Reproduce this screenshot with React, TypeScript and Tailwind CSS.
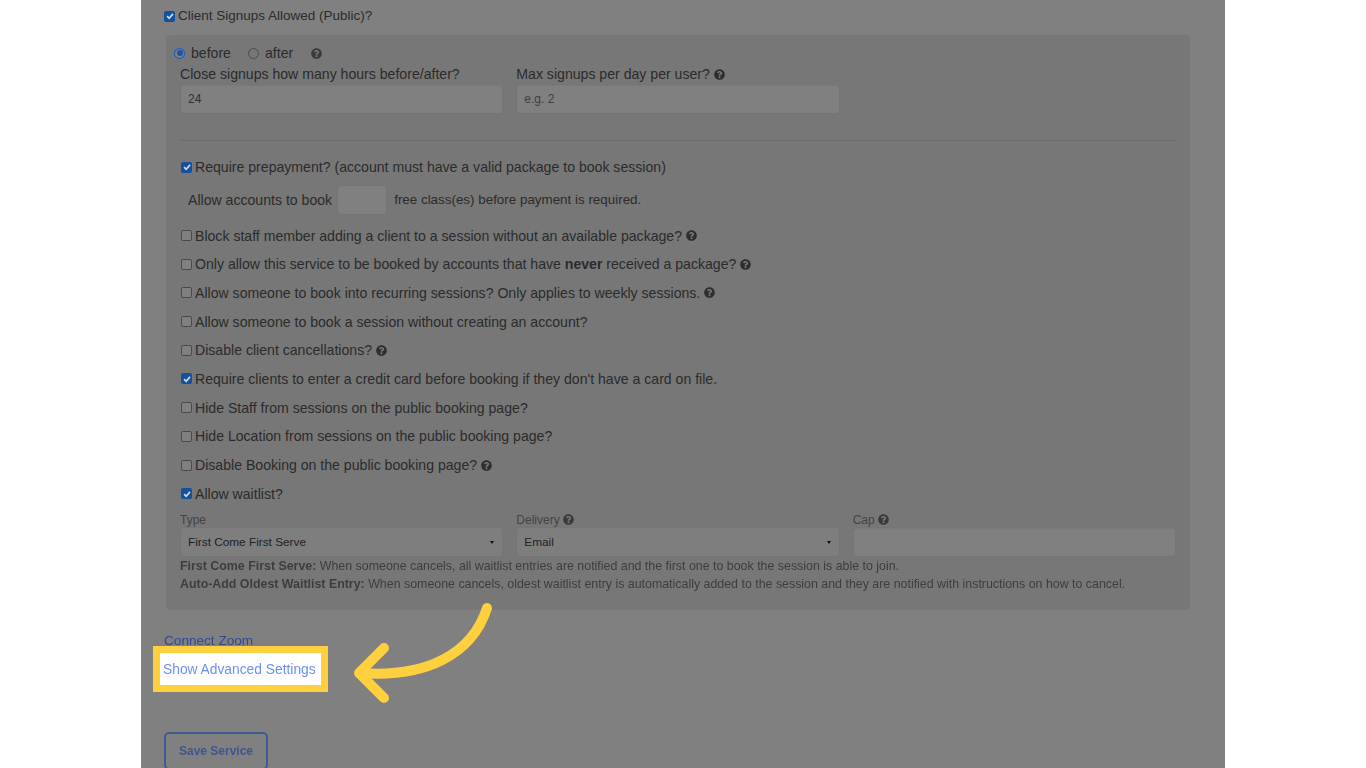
import { FaQuestionCircle } from "react-icons/fa";
import type { ReactNode } from "react";

function Help({ className = "text-[#2e2e2e]" }: { className?: string }) {
  return <FaQuestionCircle className={`inline-block h-[11px] w-[11px] shrink-0 ${className}`} />;
}

function Check({ checked = false }: { checked?: boolean }) {
  if (checked) {
    return (
      <span className="flex h-[11px] w-[11px] shrink-0 items-center justify-center rounded-[2px] bg-[#13509f]">
        <svg viewBox="0 0 12 12" className="h-[10px] w-[10px]" fill="none" stroke="#d8d8d8" strokeWidth="2">
          <path d="M2.5 6.2 5 8.7 9.6 3.4" />
        </svg>
      </span>
    );
  }
  return <span className="h-[11px] w-[11px] shrink-0 rounded-[2px] border border-[#4a4a4a] bg-[#808080]" />;
}

function Row({ checked, children }: { checked?: boolean; children: ReactNode }) {
  return (
    <div className="ml-[1px] flex h-[28.7px] items-center gap-[3px] text-[#2b2b2b]">
      <Check checked={checked} />
      <span className="flex items-center gap-[4px] whitespace-nowrap">{children}</span>
    </div>
  );
}

function Field({ value, placeholder }: { value?: string; placeholder?: string }) {
  return (
    <div className="flex h-[30px] items-center rounded-[4px] border border-[#757575] bg-[#808080] px-[7px] text-[12px] shadow-[inset_0_1px_1px_rgba(0,0,0,0.04)]">
      <span className={placeholder ? "text-[#3f3f3f]" : "text-[#2f2f2f]"}>{value ?? placeholder}</span>
    </div>
  );
}

function SelectBox({ value }: { value: string }) {
  return (
    <div className="flex h-[30px] items-center justify-between rounded-[4px] border border-[#757575] bg-[#7e7e7e] pl-[7px] pr-[8px] text-[11.8px] text-[#1f1f1f]">
      <span>{value}</span>
      <span className="h-0 w-0 border-x-[2.5px] border-t-[3px] border-x-transparent border-t-[#111111]" />
    </div>
  );
}

export default function App() {
  return (
    <div
      className="flex h-[768px] w-full justify-center overflow-hidden bg-white text-[14.1px] leading-[20px]"
      style={{ fontFamily: '"Liberation Sans", Arial, sans-serif' }}
    >
      <main className="w-[1084px] shrink-0 bg-[#808080] pl-[23px] pr-[35px] blur-[0.4px]">
        <div className="flex h-[35px] items-center gap-[3px] pb-[3px] text-[13.5px] text-[#2b2b2b]">
          <Check checked />
          <span>Client Signups Allowed (Public)?</span>
        </div>

        <section className="ml-[2px] h-[575px] rounded-[4px] bg-[#777777] pl-[14px] pr-[14px] pt-[8px]">
          <div className="flex h-[20px] items-center text-[#2b2b2b]">
            <span className="-ml-[6px] flex h-[11px] w-[11px] items-center justify-center rounded-full border-[1.5px] border-[#1a55a5] bg-[#808080] ring-1 ring-[#5f7aa3]">
              <span className="h-[6px] w-[6px] rounded-full bg-[#1a55a5]" />
            </span>
            <span className="ml-[6px]">before</span>
            <span className="ml-[17px] h-[11px] w-[11px] rounded-full border border-[#4a4a4a]" />
            <span className="ml-[6px]">after</span>
            <Help className="ml-[18px] text-[#3a3a3a]" />
          </div>

          <div className="mt-[1px] grid grid-cols-3 gap-x-[13px]">
            <div>
              <div className="h-[20px] whitespace-nowrap text-[#2b2b2b]">Close signups how many hours before/after?</div>
              <Field value="24" />
            </div>
            <div>
              <div className="flex h-[20px] items-center gap-[4px] whitespace-nowrap text-[#2b2b2b]">
                Max signups per day per user? <Help />
              </div>
              <Field placeholder="e.g. 2" />
            </div>
          </div>

          <hr className="mt-[26px] border-t border-[#6c6c6c]" />

          <div className="mt-[12px]">
            <Row checked>Require prepayment? (account must have a valid package to book session)</Row>
            <div className="mb-[2.5px] flex h-[37px] items-center pl-[8px] text-[#2b2b2b]">
              <span>Allow accounts to book</span>
              <span className="ml-[5px] h-[30px] w-[50px] rounded-[4px] border border-[#757575] bg-[#808080]" />
              <span className="ml-[7px] text-[13.4px]">free class(es) before payment is required.</span>
            </div>
            <Row>Block staff member adding a client to a session without an available package? <Help /></Row>
            <Row>
              <span>
                Only allow this service to be booked by accounts that have <b>never</b> received a package?
              </span>
              <Help />
            </Row>
            <Row>Allow someone to book into recurring sessions? Only applies to weekly sessions. <Help /></Row>
            <Row>Allow someone to book a session without creating an account?</Row>
            <Row>Disable client cancellations? <Help /></Row>
            <Row checked>Require clients to enter a credit card before booking if they don't have a card on file.</Row>
            <Row>Hide Staff from sessions on the public booking page?</Row>
            <Row>Hide Location from sessions on the public booking page?</Row>
            <Row>Disable Booking on the public booking page? <Help /></Row>
            <Row checked>Allow waitlist?</Row>
          </div>

          <div className="mt-[4px] grid grid-cols-3 gap-x-[13px] text-[12px] text-[#444444]">
            <div>
              <div className="flex h-[15px] items-center">Type</div>
              <SelectBox value="First Come First Serve" />
            </div>
            <div>
              <div className="flex h-[15px] items-center gap-[3px]">Delivery <Help className="text-[#3a3a3a]" /></div>
              <SelectBox value="Email" />
            </div>
            <div>
              <div className="flex h-[15px] items-center gap-[3px]">Cap <Help className="text-[#3a3a3a]" /></div>
              <Field />
            </div>
          </div>

          <div className="text-[12.4px] leading-[18px] text-[#3d3d3d]">
            <p><b>First Come First Serve:</b> When someone cancels, all waitlist entries are notified and the first one to book the session is able to join.</p>
            <p><b>Auto-Add Oldest Waitlist Entry:</b> When someone cancels, oldest waitlist entry is automatically added to the session and they are notified with instructions on how to cancel.</p>
          </div>
        </section>

        <div className="mt-[21px] h-[20px] text-[13.6px] text-[#2e4a93]">Connect Zoom</div>

        <div className="relative z-10 -ml-[11px] -mt-[5px] flex h-[46px] w-[175px] items-center border-[7px] border-[#ffd03d] bg-white pl-[3px] pt-[2px] text-[13.8px] text-[#6f8ff0]">
          Show Advanced Settings
        </div>

        <button className="mt-[40px] h-[38px] w-[104px] rounded-[5px] border-2 border-[#3f5a90] text-[12px] font-bold text-[#40558f]">
          Save Service
        </button>
      </main>

      <svg
        viewBox="0 0 1366 768"
        className="pointer-events-none absolute left-0 top-0 z-20 h-[768px] w-[1366px]"
        fill="none"
        stroke="#ffd03d"
        strokeWidth="10"
        strokeLinecap="round"
        strokeLinejoin="round"
      >
        <path d="M487 608C472 655 425 678 360 673" />
        <path d="M384 648 359 673 384 698" />
      </svg>
    </div>
  );
}
